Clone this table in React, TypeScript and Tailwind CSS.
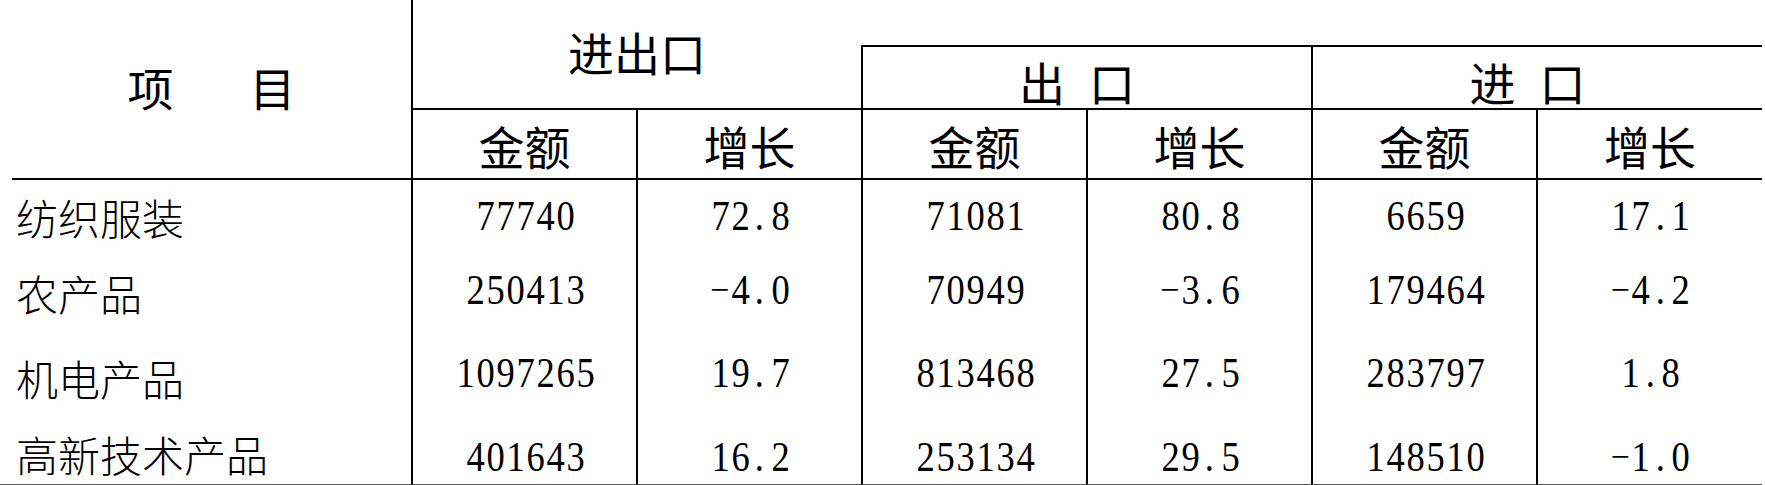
import React from "react";

const cjk = "font-['Noto_Sans_CJK_SC','Noto_Sans',sans-serif]";
const serif = "font-['Liberation_Serif','Noto_Sans_CJK_SC',serif]";

type Row = {
  label: string;
  vals: string[];
  labelPad: string;
};

const rows: Row[] = [
  { label: "纺织服装", vals: ["77740", "72.8", "71081", "80.8", "6659", "17.1"], labelPad: "pt-[16px]" },
  { label: "农产品", vals: ["250413", "-4.0", "70949", "-3.6", "179464", "-4.2"], labelPad: "pt-[18px]" },
  { label: "机电产品", vals: ["1097265", "19.7", "813468", "27.5", "283797", "1.8"], labelPad: "pt-[20px]" },
  { label: "高新技术产品", vals: ["401643", "16.2", "253134", "29.5", "148510", "-1.0"], labelPad: "pt-[12px]" },
];

function Num({ v }: { v: string }) {
  return (
    <span className={`flex text-[43px] leading-none text-black ${serif}`}>
      {[...v].map((c, i) =>
        c === "-" ? (
          <span key={i} className="inline-block w-[20px] text-center">
            <span className="inline-block -translate-y-[3px] text-[34px]">−</span>
          </span>
        ) : (
          <span key={i} className="inline-block w-[20px] text-center">
            <span className="inline-block scale-x-[0.85]">{c}</span>
          </span>
        )
      )}
    </span>
  );
}

export default function App() {
  return (
    <div className="w-[1765px] h-[485px] bg-white overflow-hidden">
      <div className="grid w-[1762px] grid-cols-[411px_225px_225px_225px_225px_225px_226px] grid-rows-[47px_63px_70px_74px_83px_84px_64px] text-black">
        {/* 项 目 */}
        <div className="row-span-3 flex">
          <div className={`ml-[12px] flex flex-1 items-center justify-center gap-[76px] border-b-2 border-black pb-[6px] text-[46px] leading-none ${cjk}`}>
            <span>项</span>
            <span>目</span>
          </div>
        </div>
        {/* 进出口 */}
        <div className={`col-span-2 row-span-2 flex items-center justify-center border-l-2 border-b-2 border-black pb-[6px] text-[46px] leading-none ${cjk}`}>
          进出口
        </div>
        {/* empty top right */}
        <div className="col-span-4 border-b-2 border-black" />
        {/* 出 口 */}
        <div className={`col-span-2 flex items-center justify-center gap-[24px] border-l-2 border-b-2 border-black pt-[6px] pr-[20px] text-[46px] leading-none ${cjk}`}>
          <span>出</span>
          <span>口</span>
        </div>
        {/* 进 口 */}
        <div className={`col-span-2 flex items-center justify-center gap-[24px] border-l-2 border-b-2 border-black pt-[6px] pr-[20px] text-[46px] leading-none ${cjk}`}>
          <span>进</span>
          <span>口</span>
        </div>
        {["金额", "增长", "金额", "增长", "金额", "增长"].map((t, i) => (
          <div
            key={i}
            className={`flex items-center justify-center border-l-2 border-b-2 border-black pt-[2px] text-[46px] leading-none ${cjk}`}
          >
            {t}
          </div>
        ))}
        {rows.map((r, ri) => {
          const last = ri === rows.length - 1;
          return (
            <React.Fragment key={ri}>
              <div
                className={`flex items-start pl-[16px] ${r.labelPad} text-[42px] font-light leading-none ${cjk} ${
                  last ? "border-b border-[#555]" : ""
                }`}
              >
                {r.label}
              </div>
              {r.vals.map((v, vi) => (
                <div
                  key={vi}
                  className={`flex items-start justify-center border-l-2 border-black pt-[14px] ${
                    last ? "border-b border-b-[#555]" : ""
                  }`}
                >
                  <Num v={v} />
                </div>
              ))}
            </React.Fragment>
          );
        })}
      </div>
    </div>
  );
}
